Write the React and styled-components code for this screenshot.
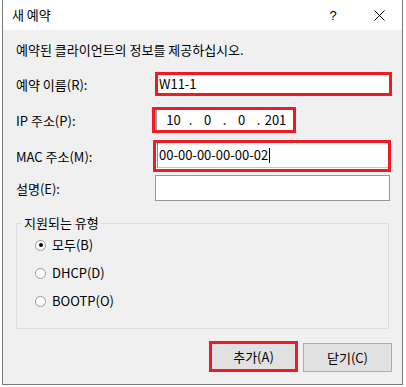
import React from 'react';
import styled, { createGlobalStyle } from 'styled-components';

const Global = createGlobalStyle`
  html, body { margin: 0; padding: 0; background: #fff; }
  body {
    font-family: "Noto Sans CJK KR", "Noto Sans", sans-serif;
    font-size: 13px;
    color: #000;
  }
  * { box-sizing: border-box; }
`;

const Page = styled.div`
  width: 406px;
  height: 387px;
  overflow: hidden;
  background: #fff;
`;

const Dialog = styled.div`
  margin-left: 2px;
  width: 401px;
  height: 385px;
  border: 1px solid #7a7a7a;
  border-top: none;
  background: #f0f0f0;
  display: flex;
  flex-direction: column;
`;

const TitleBar = styled.div`
  height: 30px;
  background: #fff;
  display: flex;
  align-items: center;
  padding-left: 9px;
`;

const Title = styled.div`
  flex: 1;
  line-height: 16px;
`;

const TitleButton = styled.div`
  width: 46px;
  height: 30px;
  display: flex;
  align-items: center;
  justify-content: center;
  font-family: "Liberation Sans", sans-serif;
  font-size: 13px;
`;

const Body = styled.div`
  flex: 1;
  padding: 12px 10px 0 13px;
  display: flex;
  flex-direction: column;
`;

const Intro = styled.div`
  line-height: 16px;
  white-space: nowrap;
`;

const Row = styled.div`
  display: flex;
  align-items: center;
  margin-top: ${p => p.$top}px;
`;

const Label = styled.div`
  width: 136px;
  line-height: 16px;
  padding-top: 2px;
  white-space: nowrap;
`;

const TextBox = styled.div`
  margin-left: ${p => p.$left || 0}px;
  width: ${p => p.$width}px;
  height: ${p => p.$height}px;
  background: #fff;
  border: ${p => (p.$mark ? '3px solid #ed1c24' : '1px solid #969696')};
  display: flex;
  align-items: stretch;
`;

const Inner = styled.div`
  flex: 1;
  display: flex;
  align-items: center;
  padding-left: ${p => p.$pad}px;
  line-height: 16px;
  border-left: ${p => (p.$edge ? '1px solid #8a8a8a' : 'none')};
  border-bottom: ${p => (p.$under ? '1px solid #c8c8c8' : 'none')};
  margin-left: ${p => p.$gap || 0}px;
  margin-bottom: ${p => (p.$under ? 1 : 0)}px;
`;

const IpInner = styled.div`
  flex: 1;
  display: flex;
  align-items: center;
  border-left: 2px solid #9a9a9a;
  padding-left: 3px;
  line-height: 16px;
`;

const IpSeg = styled.span`
  width: 27px;
  text-align: center;
`;

const IpDot = styled.span`
  width: 7px;
  text-align: center;
`;

const Caret = styled.span`
  display: inline-block;
  width: 1px;
  height: 15px;
  background: #000;
  margin-left: 1px;
`;

const Group = styled.fieldset`
  margin: 14px 0 0 0;
  width: 373px;
  border: 1px solid #dcdcdc;
  padding: 0 0 13px 0;
  min-width: 0;
`;

const Legend = styled.legend`
  margin-left: 5px;
  padding: 0 2px;
  line-height: 16px;
`;

const RadioRow = styled.div`
  height: 28px;
  display: flex;
  align-items: center;
  padding-left: 18px;
  gap: 6px;
  line-height: 16px;
`;

const RadioCircle = styled.span`
  width: 11px;
  height: 11px;
  border-radius: 50%;
  border: 1px solid #9a9a9a;
  background: #fff;
  display: flex;
  align-items: center;
  justify-content: center;
  &::after {
    content: '';
    width: 4px;
    height: 4px;
    border-radius: 50%;
    background: ${p => (p.$on ? '#000' : 'transparent')};
  }
`;

const Buttons = styled.div`
  margin-top: 12px;
  display: flex;
  justify-content: flex-end;
  align-items: flex-start;
  gap: 5px;
`;

const Button = styled.div`
  width: 89px;
  height: ${p => (p.$mark ? 31 : 29)}px;
  margin-top: ${p => (p.$mark ? 0 : 2)}px;
  background: #e1e1e1;
  border: ${p => (p.$mark ? '3px solid #ed1c24' : '1px solid #adadad')};
  display: flex;
  align-items: center;
  justify-content: center;
  line-height: 16px;
`;

const CloseIcon = () => (
  <svg width="11" height="11" viewBox="0 0 11 11">
    <path d="M0.5 0.5 L10.5 10.5 M10.5 0.5 L0.5 10.5" stroke="#000" strokeWidth="1" fill="none" />
  </svg>
);

const radios = [
  { label: '모두(B)', on: true },
  { label: 'DHCP(D)', on: false },
  { label: 'BOOTP(O)', on: false },
];

export default function App() {
  return (
    <Page>
      <Global />
      <Dialog>
        <TitleBar>
          <Title>새 예약</Title>
          <TitleButton>?</TitleButton>
          <TitleButton><CloseIcon /></TitleButton>
        </TitleBar>
        <Body>
          <Intro>예약된 클라이언트의 정보를 제공하십시오.</Intro>

          <Row $top={14}>
            <Label>예약 이름(R):</Label>
            <TextBox $mark $left={3} $width={237} $height={24}>
              <Inner $pad={1}>W11-1</Inner>
            </TextBox>
          </Row>

          <Row $top={11}>
            <Label>IP 주소(P):</Label>
            <TextBox $mark $width={144} $height={26}>
              <IpInner>
                <IpSeg>10</IpSeg>
                <IpDot>.</IpDot>
                <IpSeg>0</IpSeg>
                <IpDot>.</IpDot>
                <IpSeg>0</IpSeg>
                <IpDot>.</IpDot>
                <IpSeg>201</IpSeg>
              </IpInner>
            </TextBox>
          </Row>

          <Row $top={7}>
            <Label>MAC 주소(M):</Label>
            <TextBox $mark $left={1} $width={238} $height={32}>
              <Inner $pad={1} $edge $under $gap={1}>
                00-00-00-00-00-02<Caret />
              </Inner>
            </TextBox>
          </Row>

          <Row $top={3}>
            <Label>설명(E):</Label>
            <TextBox $left={3} $width={235} $height={26}>
              <Inner $pad={3} />
            </TextBox>
          </Row>

          <Group>
            <Legend>지원되는 유형</Legend>
            {radios.map(r => (
              <RadioRow key={r.label}>
                <RadioCircle $on={r.on} />
                <span>{r.label}</span>
              </RadioRow>
            ))}
          </Group>

          <Buttons>
            <Button $mark>추가(A)</Button>
            <Button>닫기(C)</Button>
          </Buttons>
        </Body>
      </Dialog>
    </Page>
  );
}
